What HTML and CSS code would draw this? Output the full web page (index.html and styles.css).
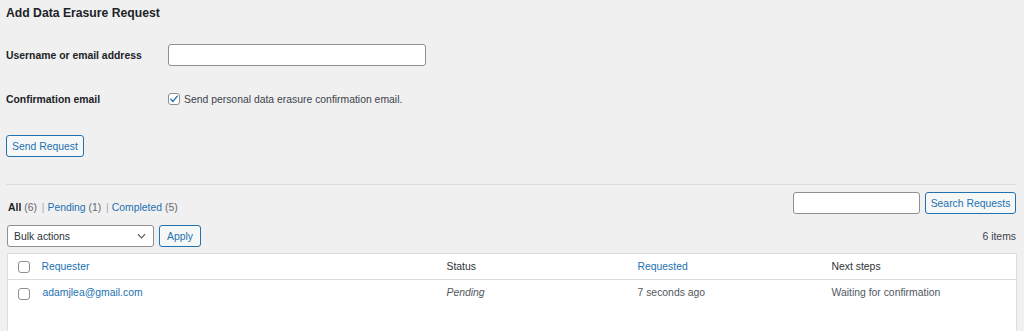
FILE: index.html
```html
<!DOCTYPE html>
<html>
<head>
    <title>Add Data Erasure Request</title>
    <link rel="stylesheet" href="styles.css">
</head>
<body>
    <div class="wrap">
        <h2 class="title">Add Data Erasure Request</h2>

        <div class="form-table">
            <div class="form-label row-user">Username or email address</div>
            <div class="form-field row-user"><input type="text" class="text-input"></div>

            <div class="form-label row-confirm">Confirmation email</div>
            <div class="form-field row-confirm">
                <span class="cb checked">
                    <svg viewBox="0 0 12 12" width="10" height="10"><path d="M2.2 6.3 L4.8 8.9 L9.9 2.6" fill="none" stroke="#2271b1" stroke-width="1.7" stroke-linecap="round" stroke-linejoin="round"/></svg>
                </span>
                <span class="cb-label">Send personal data erasure confirmation email.</span>
            </div>
        </div>

        <button class="button send-btn">Send Request</button>

        <hr class="separator">

        <div class="top-row">
            <ul class="subsubsub">
                <li><span class="current">All</span> <span class="count">(6)</span> <span class="sep">|</span></li>
                <li><a href="#">Pending</a> <span class="count">(1)</span> <span class="sep">|</span></li>
                <li><a href="#">Completed</a> <span class="count">(5)</span></li>
            </ul>
            <div class="search-box">
                <input type="search" class="search-input">
                <button class="button">Search Requests</button>
            </div>
        </div>

        <div class="tablenav">
            <div class="bulk">
                <div class="select">
                    <span>Bulk actions</span>
                    <svg viewBox="0 0 10 6" width="9" height="6"><path d="M1 1 L5 5 L9 1" fill="none" stroke="#50575e" stroke-width="1.3"/></svg>
                </div>
                <button class="button apply-btn">Apply</button>
            </div>
            <div class="items">6 items</div>
        </div>

        <table class="list-table">
            <colgroup>
                <col style="width: 26px">
                <col style="width: 405px">
                <col style="width: 191px">
                <col style="width: 194px">
                <col>
            </colgroup>
            <thead>
                <tr>
                    <th class="check-col"><span class="cb"></span></th>
                    <th><a href="#">Requester</a></th>
                    <th>Status</th>
                    <th><a href="#">Requested</a></th>
                    <th>Next steps</th>
                </tr>
            </thead>
            <tbody>
                <tr>
                    <td class="check-col"><span class="cb"></span></td>
                    <td class="email"><a href="#">adamjlea@gmail.com</a></td>
                    <td class="status">Pending</td>
                    <td>7 seconds ago</td>
                    <td>Waiting for confirmation</td>
                </tr>
            </tbody>
        </table>
    </div>
</body>
</html>
```

FILE: styles.css
```css
html, body {
    margin: 0;
    padding: 0;
    background-color: #f0f0f1;
}

body {
    font-family: "Liberation Sans", Arial, sans-serif;
    font-size: 10.4px;
    color: #3c434a;
}

a {
    color: #2271b1;
    text-decoration: none;
}

.wrap {
    padding: 0 8px 0 6px;
}

.title {
    margin: 0;
    padding-top: 5px;
    font-size: 12.2px;
    line-height: 16px;
    font-weight: bold;
    color: #1d2327;
}

.form-table {
    display: grid;
    grid-template-columns: 162px 1fr;
    grid-template-rows: 22px 14px;
    row-gap: 26px;
    margin-top: 23px;
}

.form-label {
    display: flex;
    align-items: center;
    font-weight: bold;
    color: #1d2327;
}

.form-field {
    display: flex;
    align-items: center;
}

.text-input {
    box-sizing: border-box;
    width: 258px;
    height: 22px;
    margin: 0;
    border: 1px solid #8c8f94;
    border-radius: 3px;
    background: white;
}

.cb {
    box-sizing: border-box;
    display: inline-flex;
    align-items: center;
    justify-content: center;
    width: 12px;
    height: 12px;
    border: 1px solid #8c8f94;
    border-radius: 3px;
    background: white;
    vertical-align: middle;
}

.cb-label {
    margin-left: 4px;
    color: #3c434a;
}

.button {
    box-sizing: border-box;
    height: 22px;
    margin: 0;
    padding: 0 7px;
    white-space: nowrap;
    font-family: "Liberation Sans", Arial, sans-serif;
    font-size: 10.4px;
    color: #2271b1;
    background: #f6f7f7;
    border: 1px solid #2271b1;
    border-radius: 3px;
}

.send-btn {
    display: block;
    width: 78px;
    padding: 0;
    margin-top: 29px;
}

.separator {
    margin: 27px 0 0 0;
    border: none;
    border-top: 1px solid #dcdcde;
}

.top-row {
    display: flex;
    justify-content: space-between;
    align-items: flex-start;
    height: 22px;
    margin-top: 7px;
}

.subsubsub {
    list-style: none;
    margin: 9px 0 0 2px;
    padding: 0;
    display: flex;
    line-height: 14px;
    color: #646970;
}

.subsubsub li {
    margin-right: 3px;
}

.subsubsub .current {
    color: #1d2327;
    font-weight: bold;
}

.subsubsub .sep {
    margin-left: 2px;
    color: #a7aaad;
}

.search-box {
    display: flex;
    gap: 5px;
}

.search-input {
    box-sizing: border-box;
    width: 127px;
    height: 22px;
    margin: 0;
    border: 1px solid #8c8f94;
    border-radius: 3px;
    background: white;
}

.search-box .button {
    width: 91px;
    padding: 0;
}

.tablenav {
    display: flex;
    justify-content: space-between;
    align-items: center;
    margin-top: 11px;
    height: 22px;
}

.bulk {
    display: flex;
    gap: 5px;
    margin-left: 1px;
}

.select {
    box-sizing: border-box;
    display: flex;
    justify-content: space-between;
    align-items: center;
    width: 147px;
    height: 22px;
    padding: 0 7px 0 6px;
    background: white;
    border: 1px solid #8c8f94;
    border-radius: 3px;
    color: #2c3338;
}

.apply-btn {
    width: 42px;
    padding: 0;
}

.items {
    color: #3c434a;
}

.list-table {
    box-sizing: border-box;
    width: 1010px;
    margin: 6px 0 0 1px;
    table-layout: fixed;
    border-collapse: collapse;
    border: 1px solid #dcdcde;
    background: white;
}

.list-table th {
    height: 25px;
    padding: 0 8px;
    text-align: left;
    font-weight: normal;
    color: #2c3338;
    border-bottom: 1px solid #dcdcde;
}

.list-table td {
    height: 44px;
    padding: 6px 8px 0 8px;
    vertical-align: top;
    line-height: 14px;
    color: #50575e;
    border-bottom: 1px solid #dcdcde;
}

.list-table .check-col {
    padding: 0 0 0 10px;
}

.list-table td.check-col {
    padding-top: 7px;
}

.list-table td.email {
    padding-left: 9px;
}

.status {
    font-style: italic;
    color: #646970;
}
```
